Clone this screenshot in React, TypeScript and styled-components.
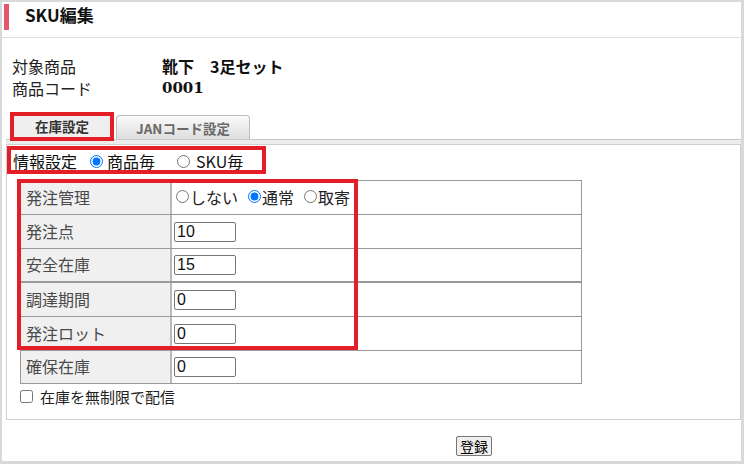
import React from "react";
import styled, { createGlobalStyle } from "styled-components";

const GlobalStyle = createGlobalStyle`
  html, body { margin: 0; padding: 0; }
  body {
    font-family: "Noto Sans CJK JP", "Noto Sans", sans-serif;
    color: #222;
    background: #d9d9d9;
  }
  * { box-sizing: border-box; }
`;

const RED = "#e41e26";

const Screen = styled.div`
  width: 744px;
  height: 464px;
  padding: 2px 3px 3px 2px;
  background: #d9d9d9;
`;

const Frame = styled.div`
  height: 100%;
  background: #fff;
  display: flex;
  flex-direction: column;
`;

const Header = styled.div`
  height: 36px;
  padding: 2px 0 0 2px;
  border-bottom: 1px solid #dedede;
  display: flex;
  align-items: flex-start;
  gap: 16px;
`;

const Accent = styled.div`
  width: 5px;
  height: 26px;
  background: #e4566b;
`;

const Title = styled.h1`
  margin: 0;
  font-size: 17px;
  line-height: 22px;
  font-weight: 700;
  color: #111;
`;

const InfoGrid = styled.div`
  margin-top: 17px;
  padding-left: 10px;
  display: grid;
  grid-template-columns: 150px auto;
  grid-auto-rows: 22px;
  align-items: center;
  font-size: 16px;
  line-height: 22px;
`;

const InfoLabel = styled.div`
  color: #222;
`;

const InfoValue = styled.div<{ $serif?: boolean }>`
  font-weight: 700;
  color: #111;
  font-family: ${(p) =>
    p.$serif ? '"DejaVu Serif", "Liberation Serif", serif' : '"Noto Sans CJK JP", sans-serif'};
  font-size: ${(p) => (p.$serif ? "15px" : "16px")};
`;

const TabStrip = styled.div`
  position: relative;
  margin: 14px 0 0 4px;
  padding-left: 6px;
  height: 27px;
  border-bottom: 1px solid #c8c8c8;
  display: flex;
  align-items: flex-end;
  gap: 4px;
`;

const Tab = styled.div<{ $active?: boolean }>`
  height: ${(p) => (p.$active ? "26px" : "24px")};
  width: ${(p) => (p.$active ? "100px" : "134px")};
  display: flex;
  align-items: center;
  justify-content: center;
  font-size: 13.5px;
  font-weight: 700;
  color: ${(p) => (p.$active ? "#333" : "#6a6a6a")};
  background: ${(p) =>
    p.$active ? "#efefef" : "linear-gradient(#fbfbfb, #dedede)"};
  border: ${(p) => (p.$active ? "none" : "1px solid #bdbdbd")};
  border-bottom: none;
  border-radius: 4px 4px 0 0;
`;

const Band = styled.div`
  margin-left: 4px;
  height: 4px;
  background: #ececec;
`;

const Highlight = styled.div<{ $l: number; $t: number; $w: number; $h: number }>`
  position: absolute;
  left: ${(p) => p.$l}px;
  top: ${(p) => p.$t}px;
  width: ${(p) => p.$w}px;
  height: ${(p) => p.$h}px;
  border: 4px solid ${RED};
  pointer-events: none;
`;

const Panel = styled.div`
  position: relative;
  margin-left: 4px;
  border: 1px solid #cfcfcf;
  padding: 5px 0 12px 0;
`;

const ModeRow = styled.div`
  height: 22px;
  padding-left: 6px;
  display: flex;
  align-items: center;
  font-size: 16px;
  color: #111;
`;

const Radio = styled.input.attrs({ type: "radio" })<{ $ml?: number }>`
  width: 13px;
  height: 13px;
  margin: 0 0 0 ${(p) => p.$ml ?? 0}px;
  accent-color: #0075ff;
`;

const RadioText = styled.span<{ $gap: number }>`
  margin-left: ${(p) => p.$gap}px;
`;

const Table = styled.div`
  margin: 8px 0 0 13px;
  width: 562px;
  border: 1px solid #999;
`;

const Row = styled.div<{ $short?: boolean; $thick?: boolean; $last?: boolean }>`
  display: grid;
  grid-template-columns: 151px 1fr;
  height: ${(p) =>
    (p.$short ? 32 : 33) + (p.$last ? 0 : p.$thick ? 2 : 1)}px;
  border-bottom: ${(p) => (p.$last ? "none" : p.$thick ? "2px solid #999" : "1px solid #999")};
`;

const LabelCell = styled.div`
  background: #f0f0f0;
  border-right: 2px solid #b9b9b9;
  padding: 0 0 2px 5px;
  display: flex;
  align-items: center;
  font-size: 16px;
  color: #4a4a4a;
`;

const ValueCell = styled.div`
  display: flex;
  align-items: center;
  padding-left: 2px;
  font-size: 16px;
  color: #222;
`;

const RadioGroup = styled.div`
  display: flex;
  align-items: center;
  padding-bottom: 2px;
`;

const NumInput = styled.input`
  width: 62px;
  height: 20px;
  border: 1px solid #767676;
  border-radius: 2px;
  padding: 0 2px;
  font-family: "Liberation Sans Narrow", "Liberation Sans", sans-serif;
  font-size: 16px;
  color: #111;
  background: #fff;
`;

const CheckRow = styled.label`
  margin: 1px 0 0 13px;
  height: 22px;
  display: flex;
  align-items: center;
  gap: 7px;
  font-size: 15px;
  color: #222;
`;

const Check = styled.input.attrs({ type: "checkbox" })`
  width: 13px;
  height: 13px;
  margin: 0;
`;

const Footer = styled.div`
  padding: 13px 0 0 454px;
`;

const SubmitButton = styled.button`
  height: 20px;
  padding: 0 3px;
  border: 1px solid #767676;
  border-radius: 2px;
  background: #efefef;
  font-family: "Noto Sans CJK JP", sans-serif;
  font-size: 14px;
  line-height: 18px;
  color: #000;
`;

const rows: { label: string; value: string; short?: boolean; thick?: boolean }[] = [
  { label: "発注点", value: "10" },
  { label: "安全在庫", value: "15", short: true, thick: true },
  { label: "調達期間", value: "0" },
  { label: "発注ロット", value: "0" },
];

export default function App() {
  return (
    <>
      <GlobalStyle />
      <Screen>
        <Frame>
          <Header>
            <Accent />
            <Title>SKU編集</Title>
          </Header>

          <InfoGrid>
            <InfoLabel>対象商品</InfoLabel>
            <InfoValue>靴下　3足セット</InfoValue>
            <InfoLabel>商品コード</InfoLabel>
            <InfoValue $serif>0001</InfoValue>
          </InfoGrid>

          <TabStrip>
            <Tab $active>在庫設定</Tab>
            <Tab>JANコード設定</Tab>
            <Highlight $l={4} $t={-1} $w={104} $h={29} />
          </TabStrip>
          <Band />

          <Panel>
            <ModeRow>
              情報設定
              <Radio name="mode" defaultChecked $ml={13} />
              <RadioText $gap={4}>商品毎</RadioText>
              <Radio name="mode" $ml={22} />
              <RadioText $gap={6}>SKU毎</RadioText>
            </ModeRow>

            <Table>
              <Row>
                <LabelCell>発注管理</LabelCell>
                <ValueCell>
                  <RadioGroup>
                    <Radio name="order" $ml={2} />
                    <RadioText $gap={1}>しない</RadioText>
                    <Radio name="order" defaultChecked $ml={10} />
                    <RadioText $gap={1}>通常</RadioText>
                    <Radio name="order" $ml={10} />
                    <RadioText $gap={1}>取寄</RadioText>
                  </RadioGroup>
                </ValueCell>
              </Row>
              {rows.map((r) => (
                <Row key={r.label} $short={r.short} $thick={r.thick}>
                  <LabelCell>{r.label}</LabelCell>
                  <ValueCell>
                    <NumInput defaultValue={r.value} />
                  </ValueCell>
                </Row>
              ))}
              <Row $short $last>
                <LabelCell>確保在庫</LabelCell>
                <ValueCell>
                  <NumInput defaultValue="0" />
                </ValueCell>
              </Row>
            </Table>

            <CheckRow>
              <Check />
              在庫を無制限で配信
            </CheckRow>

            <Highlight $l={0} $t={1} $w={259} $h={28} />
            <Highlight $l={10} $t={34} $w={341} $h={171} />
          </Panel>

          <Footer>
            <SubmitButton>登録</SubmitButton>
          </Footer>
        </Frame>
      </Screen>
    </>
  );
}
